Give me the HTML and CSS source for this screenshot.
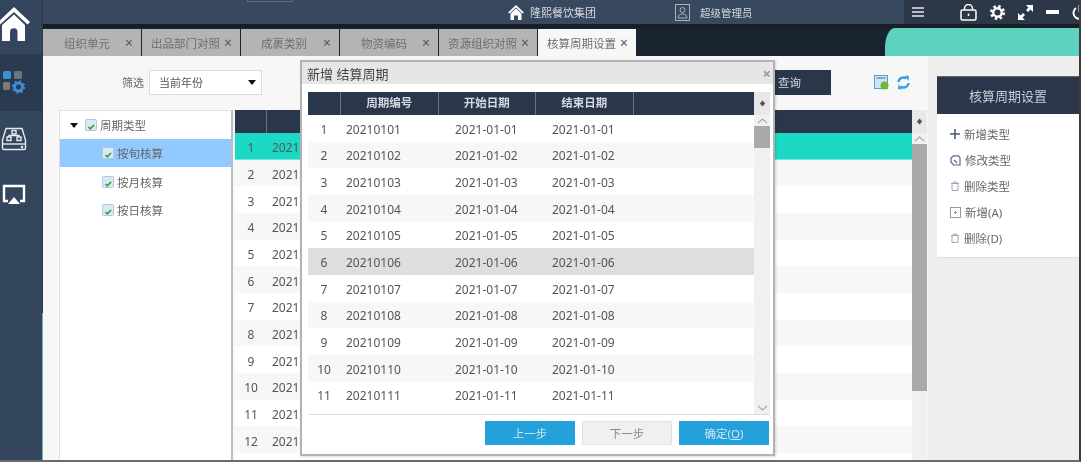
FILE: index.html
```html
<!DOCTYPE html>
<html lang="zh-CN">
<head>
    <meta charset="UTF-8">
    <title>核算周期设置</title>
    <link rel="stylesheet" href="styles.css">
</head>
<body>
    <svg class="sprite" xmlns="http://www.w3.org/2000/svg">
        <symbol id="check" viewBox="0 0 12 12">
            <rect x="0.5" y="0.5" width="11" height="11" rx="1" fill="#dce7f5" stroke="#b4c6e0"/>
            <path d="M3.500 8 5.300 9.800 9 6" fill="none" stroke="#1fa83a" stroke-width="1.700"/>
        </symbol>
        <symbol id="trash" viewBox="0 0 10 10">
            <path d="M1 2.500h8M3.500 2.500V1h3v1.500M2 2.500v7h6v-7" fill="none" stroke="#9aa6b6" stroke-width="1"/>
        </symbol>
        <symbol id="corner" viewBox="0 0 9 9">
            <path d="M4.500 .5 8 4.500 4.500 8.500 1 4.500Z" fill="#555"/>
        </symbol>
        <symbol id="chev-up" viewBox="0 0 11 6">
            <path d="M1 5 5.500 1 10 5" fill="none" stroke="#aaa" stroke-width="1.200"/>
        </symbol>
        <symbol id="chev-down" viewBox="0 0 11 6">
            <path d="M1 1 5.500 5 10 1" fill="none" stroke="#aaa" stroke-width="1.200"/>
        </symbol>
    </svg>
    <div class="app">
        <!-- 左侧菜单 -->
        <nav class="sidebar">
            <div class="nav-home">
                <svg width="30" height="36" viewBox="0 0 30 36"><path d="M-2 16 14 1 30 16 27.500 18.500 14 6 0 18.500Z" fill="#fff"/><path d="M2 19 14 8.500 25 19V35H17.500V26A3.500 3.500 0 0 0 10 26V35H2Z" fill="#fff"/></svg>
            </div>
            <div class="nav-item active">
                <svg width="26" height="26" viewBox="0 0 26 26">
                    <rect x="2" y="2" width="8" height="8" rx="1.500" fill="#3b8fd6"/>
                    <rect x="13" y="2" width="8" height="8" rx="1.500" fill="#6d7480"/>
                    <rect x="2" y="13" width="7" height="8" rx="1.500" fill="#7b7b78"/>
                    <circle cx="17.500" cy="18" r="4" fill="none" stroke="#3b8fd6" stroke-width="3"/>
                    <circle cx="17.500" cy="18" r="6" fill="none" stroke="#3b8fd6" stroke-width="1.500" stroke-dasharray="2 2.700"/>
                </svg>
            </div>
            <div class="nav-item">
                <svg width="26" height="26" viewBox="0 0 26 26" fill="none" stroke="#e8ebef" stroke-width="1.400">
                    <path d="M5 2.500H21L24.500 14V22A1.500 1.500 0 0 1 23 23.500H3A1.500 1.500 0 0 1 1.500 22V14Z"/>
                    <path d="M1.500 18H24.500"/>
                    <rect x="11" y="4.500" width="4" height="3.500"/><rect x="6" y="11" width="4" height="3.500"/><rect x="16" y="11" width="4" height="3.500"/>
                    <path d="M13 8V9.500H8V11M13 9.500H18V11"/>
                    <circle cx="21" cy="21" r=".6"/>
                </svg>
            </div>
            <div class="nav-item">
                <svg width="26" height="26" viewBox="0 0 26 26">
                    <path d="M7 19H3V4H23V19H19" fill="none" stroke="#fff" stroke-width="2.400"/>
                    <path d="M13 15 19 22H7Z" fill="#fff"/>
                </svg>
            </div>
        </nav>

        <div class="main">
            <!-- 顶部栏 -->
            <header class="topbar">
                <div class="top-mark"></div>
                <div class="brand">
                    <svg width="16" height="15" viewBox="0 0 16 15"><path d="M8 0 16 7.500 14.500 8.500 8 2.500 1.500 8.500 0 7.500Z" fill="#fff"/><path d="M2.500 8.500 8 3.500 13.500 8.500V15H10V10.500H6V15H2.500Z" fill="#fff"/></svg>
                    <span>隆熙餐饮集团</span>
                </div>
                <div class="user">
                    <svg width="15" height="17" viewBox="0 0 15 17" fill="none" stroke="#aab2be"><rect x=".5" y=".5" width="14" height="16"/><circle cx="7.500" cy="6" r="2.500"/><path d="M3 14C3 11 5 10 7.500 10S12 11 12 14Z"/></svg>
                    <span>超级管理员</span>
                </div>
                <div class="tools">
                    <svg width="12" height="10" viewBox="0 0 12 10"><path d="M0 1h12M0 5h12M0 9h12" stroke="#e6e8ec" stroke-width="1.700"/></svg>
                    <svg class="lock" width="17" height="17" viewBox="0 0 17 17" fill="none" stroke="#fff" stroke-width="1.500"><rect x="1" y="6" width="15" height="10" rx="1.500"/><path d="M4.500 6V4.500A4 4 0 0 1 12.500 4.500V6M8.500 9.500V12"/></svg>
                    <svg width="15" height="15" viewBox="0 0 16 16"><circle cx="8" cy="8" r="4.500" fill="none" stroke="#fff" stroke-width="2.500"/><circle cx="8" cy="8" r="6.500" fill="none" stroke="#fff" stroke-width="3" stroke-dasharray="2.600 2.500"/></svg>
                    <svg width="15" height="15" viewBox="0 0 15 15" fill="#fff"><path d="M8 0H15V7L12.500 4.500 10 7 8 5 10.500 2.500ZM7 15H0V8L2.500 10.500 5 8 7 10 4.500 12.500Z"/></svg>
                    <svg width="13" height="4" viewBox="0 0 13 4"><rect width="13" height="4" fill="#fff"/></svg>
                    <svg width="15" height="15" viewBox="0 0 15 15" fill="none" stroke="#fff" stroke-width="2"><path d="M4 3A6 6 0 1 0 11 3M7.500 0V7"/></svg>
                </div>
            </header>

            <!-- 标签页 -->
            <div class="tabbar">
                <div class="tab"><span>组织单元</span><i>×</i></div>
                <div class="tab"><span>出品部门对照</span><i>×</i></div>
                <div class="tab"><span>成裹类别</span><i>×</i></div>
                <div class="tab"><span>物资编码</span><i>×</i></div>
                <div class="tab"><span>资源组织对照</span><i>×</i></div>
                <div class="tab current"><span>核算周期设置</span><i>×</i></div>
                <div class="tab-blob"></div>
            </div>

            <div class="content">
                <section class="work">
                    <div class="filter">
                        <label class="filter-label">筛选</label>
                        <div class="select"><span>当前年份</span><b></b></div>
                        <button class="btn-query">查询</button>
                        <svg class="export" width="15" height="15" viewBox="0 0 15 15"><rect x=".5" y=".5" width="13" height="13" fill="#cfe3f2" stroke="#5d9ccb"/><path d="M2.500 3h9" stroke="#5d9ccb" stroke-width="1.500"/><circle cx="10.500" cy="10.500" r="4" fill="#71b53a"/></svg>
                        <svg class="refresh" width="13" height="15" viewBox="0 0 13 15" fill="none" stroke="#3d9fe2" stroke-width="2.400"><path d="M1.500 7A5 5 0 0 1 9.500 3.500"/><path d="M11.500 8A5 5 0 0 1 3.500 11.500"/><path d="M8 .5 12 1 11.500 6Z" fill="#3d9fe2" stroke="none"/><path d="M5 14.500 1 14 1.500 9Z" fill="#3d9fe2" stroke="none"/></svg>
                    </div>
                    <div class="panes">
                        <div class="tree">
                            <div class="tree-row root"><b class="caret"></b><svg width="12" height="12"><use href="#check"/></svg><span>周期类型</span></div>
                            <div class="tree-row selected"><svg width="12" height="12"><use href="#check"/></svg><span>按旬核算</span></div>
                            <div class="tree-row"><svg width="12" height="12"><use href="#check"/></svg><span>按月核算</span></div>
                            <div class="tree-row"><svg width="12" height="12"><use href="#check"/></svg><span>按日核算</span></div>
                        </div>
                        <div class="grid">
                            <div class="grid-body">
                                <div class="grid-head"><div class="h-no"></div><div class="h-code"></div></div>
                                <div class="row teal"><span class="no">1</span><span class="code">2021</span></div>
                                <div class="row"><span class="no">2</span><span class="code">2021</span></div>
                                <div class="row"><span class="no">3</span><span class="code">2021</span></div>
                                <div class="row"><span class="no">4</span><span class="code">2021</span></div>
                                <div class="row"><span class="no">5</span><span class="code">2021</span></div>
                                <div class="row"><span class="no">6</span><span class="code">2021</span></div>
                                <div class="row"><span class="no">7</span><span class="code">2021</span></div>
                                <div class="row"><span class="no">8</span><span class="code">2021</span></div>
                                <div class="row"><span class="no">9</span><span class="code">2021</span></div>
                                <div class="row"><span class="no">10</span><span class="code">2021</span></div>
                                <div class="row"><span class="no">11</span><span class="code">2021</span></div>
                                <div class="row"><span class="no">12</span><span class="code">2021</span></div>
                            </div>
                            <div class="scroll main-scroll">
                                <div class="scroll-corner"><svg width="7" height="7"><use href="#corner"/></svg></div>
                                <div class="scroll-up"><svg width="11" height="6"><use href="#chev-up"/></svg></div>
                                <div class="thumb"></div>
                            </div>
                        </div>
                    </div>
                </section>

                <aside class="side">
                    <div class="side-card">
                        <h3 class="side-title">核算周期设置</h3>
                        <ul class="side-list">
                            <li><svg width="10" height="10" viewBox="0 0 10 10"><path d="M5 0V10M0 5H10" stroke="#44597c" stroke-width="1.500"/></svg>新增类型</li>
                            <li><svg width="11" height="11" viewBox="0 0 11 11" fill="none" stroke="#56688a" stroke-width="1.200"><path d="M1 3 3.500 .8H8.500L10 3V10H3.500L1 7Z"/><path d="M4 5 7 8"/></svg>修改类型</li>
                            <li><svg width="10" height="10"><use href="#trash"/></svg>删除类型</li>
                            <li><svg width="11" height="11" viewBox="0 0 11 11" fill="none" stroke="#8d99ad"><rect x=".5" y=".5" width="10" height="10"/><path d="M4 5.500H7M5.500 4V7"/></svg>新增(A)</li>
                            <li><svg width="10" height="10"><use href="#trash"/></svg>删除(D)</li>
                        </ul>
                    </div>
                </aside>
            </div>
        </div>

        <!-- 弹窗 -->
        <div class="modal">
            <div class="modal-title"><span>新增 结算周期</span><i>×</i></div>
            <div class="modal-grid">
                <div class="modal-table">
                    <div class="m-head">
                        <div class="m-no"></div><div class="m-col">周期编号</div><div class="m-col">开始日期</div><div class="m-col">结束日期</div><div class="m-rest"></div>
                    </div>
                    <div class="m-row"><span class="m-no">1</span><span class="m-cell">20210101</span><span class="m-cell">2021-01-01</span><span class="m-cell">2021-01-01</span></div>
                    <div class="m-row"><span class="m-no">2</span><span class="m-cell">20210102</span><span class="m-cell">2021-01-02</span><span class="m-cell">2021-01-02</span></div>
                    <div class="m-row"><span class="m-no">3</span><span class="m-cell">20210103</span><span class="m-cell">2021-01-03</span><span class="m-cell">2021-01-03</span></div>
                    <div class="m-row"><span class="m-no">4</span><span class="m-cell">20210104</span><span class="m-cell">2021-01-04</span><span class="m-cell">2021-01-04</span></div>
                    <div class="m-row"><span class="m-no">5</span><span class="m-cell">20210105</span><span class="m-cell">2021-01-05</span><span class="m-cell">2021-01-05</span></div>
                    <div class="m-row hover"><span class="m-no">6</span><span class="m-cell">20210106</span><span class="m-cell">2021-01-06</span><span class="m-cell">2021-01-06</span></div>
                    <div class="m-row"><span class="m-no">7</span><span class="m-cell">20210107</span><span class="m-cell">2021-01-07</span><span class="m-cell">2021-01-07</span></div>
                    <div class="m-row"><span class="m-no">8</span><span class="m-cell">20210108</span><span class="m-cell">2021-01-08</span><span class="m-cell">2021-01-08</span></div>
                    <div class="m-row"><span class="m-no">9</span><span class="m-cell">20210109</span><span class="m-cell">2021-01-09</span><span class="m-cell">2021-01-09</span></div>
                    <div class="m-row"><span class="m-no">10</span><span class="m-cell">20210110</span><span class="m-cell">2021-01-10</span><span class="m-cell">2021-01-10</span></div>
                    <div class="m-row"><span class="m-no">11</span><span class="m-cell">20210111</span><span class="m-cell">2021-01-11</span><span class="m-cell">2021-01-11</span></div>
                </div>
                <div class="scroll modal-scroll">
                    <div class="scroll-corner"><svg width="7" height="7"><use href="#corner"/></svg></div>
                    <div class="scroll-up"><svg width="11" height="6"><use href="#chev-up"/></svg></div>
                    <div class="thumb"></div>
                    <div class="scroll-down"><svg width="11" height="6"><use href="#chev-down"/></svg></div>
                </div>
            </div>
            <div class="modal-foot">
                <button class="btn-blue">上一步</button>
                <button class="btn-off">下一步</button>
                <button class="btn-blue">确定(<u>O</u>)</button>
            </div>
        </div>
    </div>
</body>
</html>
```

FILE: styles.css
```css
:root{
    --navy: #34465e;
    --dark: #2a3649;
    --ink: #1a2330;
    --text: #555;
    --font: "Noto Sans", "Noto Sans CJK SC", sans-serif;
}
*{
    box-sizing: border-box;
}
html, body{
    margin: 0;
    height: 100%;
    overflow: hidden;
}
body{
    background-color: #fff;
    color: var(--text);
    font-family: var(--font);
    font-size: 12px;
    border-right: 2px solid #3b3b3b;
    border-bottom: 2px solid #6a6a6a;
}
.sprite{
    display: none;
}
.app{
    position: relative;
    display: flex;
    height: 460px;
    width: 1079px;
    overflow: hidden;
    filter: blur(.5px);
}

/* sidebar */
.sidebar{
    width: 43px;
    flex: 0 0 auto;
    background-color: var(--navy);
    border-right: 1px solid;
    border-image: linear-gradient(#2c3747 68%, #6fb5a8 68%) 1;
}
.nav-home{
    height: 54px;
    padding-top: 6px;
}
.nav-item{
    height: 56.500px;
    display: flex;
    align-items: center;
    padding-left: 1px;
}
.nav-item.active{
    background-color: #2a3a50;
}

/* top */
.main{
    flex: 1;
    min-width: 0;
    display: flex;
    flex-direction: column;
}
.topbar{
    height: 24px;
    flex: 0 0 auto;
    display: flex;
    align-items: center;
    background-color: #38485f;
    color: #d5d9df;
    font-size: 11px;
}
.top-mark{
    width: 46px;
    height: 2px;
    margin-left: 204px;
    align-self: flex-start;
    border: 1px solid #5d6a7c;
    border-top: 0;
}
.brand{
    margin-left: 215px;
    width: 167px;
    display: flex;
    align-items: center;
    gap: 6px;
}
.user{
    width: 229px;
    display: flex;
    align-items: center;
    gap: 10px;
    font-size: 10.500px;
}
.tools{
    flex: 1;
    height: 100%;
    display: flex;
    align-items: center;
    padding-left: 8px;
    gap: 13px;
    background-color: #2c3747;
    overflow: hidden;
}
.lock{
    margin-left: 23px;
}
.tools svg{
    flex: 0 0 auto;
}
.tabbar{
    height: 32px;
    flex: 0 0 auto;
    display: flex;
    align-items: flex-end;
    gap: 1px;
    background-color: var(--ink);
    border-top: 4px solid #181e28;
}
.tab{
    width: 98px;
    height: 27px;
    display: flex;
    align-items: center;
    justify-content: flex-end;
    padding-right: 8px;
    background-color: #b4b4b4;
    color: #6a6f75;
    font-size: 11.500px;
}
.tab:nth-child(2) span, .tab:nth-child(5) span, .tab.current span{
    margin-right: 4px;
}
.tab:nth-child(1) span, .tab:nth-child(4) span{
    margin-right: 15px;
}
.tab:nth-child(3) span{
    margin-right: 16px;
}
.tab i{
    font-style: normal;
    font-size: 14px;
    line-height: 1;
    color: #555;
}
.tab.current{
    background-color: #f7f7f7;
}
.tab-blob{
    width: 194px;
    height: 28px;
    margin-left: auto;
    background-color: #5dd3bd;
    border-radius: 10px 0 0 0 / 20px 0 0 0;
}

/* content */
.content{
    flex: 1;
    min-height: 0;
    display: flex;
}
.work{
    width: 885px;
    flex: 0 0 auto;
    background-color: #f7f7f7;
}
.filter{
    height: 54px;
    display: flex;
    align-items: center;
    padding: 0 0 2px 79px;
}
.filter-label{
    width: 27px;
    color: #6a6a6a;
    font-size: 11px;
}
.select{
    width: 113px;
    height: 25px;
    display: flex;
    align-items: center;
    justify-content: space-between;
    padding: 0 5px 0 9px;
    background-color: #fff;
    border: 1px solid #dcdcdc;
    font-size: 11px;
}
.select b, .caret{
    display: block;
    width: 0;
    height: 0;
    border: 4px solid transparent;
    border-top: 5px solid #111;
    border-bottom: 0;
}
.btn-query{
    width: 91px;
    height: 25px;
    margin-left: 478px;
    padding: 0 0 0 38px;
    text-align: left;
    background-color: var(--dark);
    color: #d5d9df;
    border: 0;
    font-family: var(--font);
    font-size: 11.500px;
}
.export{
    margin-left: 43px;
}
.refresh{
    margin-left: 8px;
}
.panes{
    display: flex;
    height: 352px;
    margin-left: 16px;
    gap: 2px;
}
.tree{
    width: 174px;
    background-color: #fff;
    border: 1px solid #e2e2e2;
    border-right: 2px solid #bdbdbd;
    border-bottom: 0;
}
.tree-row{
    height: 28.400px;
    display: flex;
    align-items: center;
    gap: 3px;
    padding-left: 42px;
    font-size: 11.500px;
    color: #666;
}
.tree-row.root{
    height: 28px;
    padding-left: 10px;
    gap: 0;
}
.tree-row.root svg{
    margin: 0 3px 0 7px;
}
.tree-row.selected{
    background-color: #92c9ff;
}
.grid{
    width: 692px;
    display: flex;
}
.grid-body{
    width: 677px;
    background-color: #fff;
}
.grid-head{
    height: 23px;
    display: flex;
    background-color: var(--dark);
}
.h-no{
    width: 32px;
    border-right: 1px solid #68717e;
}
.h-code{
    width: 98px;
    border-right: 1px solid #68717e;
}
.row{
    height: 26.670px;
    padding-top: 3px;
    display: flex;
    align-items: center;
}
.row:nth-child(even){
    background-color: #fff;
}
.row:nth-child(odd){
    background-color: #f7f7f7;
}
.row.teal{
    background-color: #1bd9c4;
    border-bottom: 1px solid #6ee8da;
}
.no{
    width: 32px;
    text-align: center;
}
.code{
    padding-left: 5px;
}
.scroll{
    width: 15px;
    flex: 0 0 auto;
    background-color: #f0f0f0;
    display: flex;
    flex-direction: column;
}
.scroll-corner{
    height: 23px;
    display: flex;
    align-items: center;
    justify-content: center;
    background-color: #e8e8e8;
}
.scroll-up, .scroll-down{
    height: 11px;
    display: flex;
    align-items: center;
    justify-content: center;
}
.thumb{
    background-color: #a9a9a9;
}
.main-scroll .thumb{
    height: 247px;
}

/* right panel */
.side{
    flex: 1;
    min-width: 0;
    padding: 20px 0 0 9px;
    background-color: #eeeeee;
}
.side-card{
    height: 182px;
    background-color: #fff;
    border-bottom: 1px solid #ddd;
}
.side-title{
    margin: 0;
    height: 38px;
    line-height: 38px;
    text-align: center;
    background-color: var(--dark);
    color: #c6ccd4;
    font-size: 13px;
    font-weight: normal;
    border-top: 1px solid #666;
}
.side-list{
    list-style: none;
    margin: 0;
    padding: 7px 0 0 13px;
}
.side-list li{
    height: 26px;
    display: flex;
    align-items: center;
    gap: 4px;
    font-size: 11.500px;
    color: #666;
}

/* modal */
.modal{
    position: absolute;
    left: 300px;
    top: 60px;
    width: 475px;
    height: 396px;
    background-color: #fff;
    border: 2px solid #b3b3b3;
    display: flex;
    flex-direction: column;
    box-shadow: 1px 1px 2px rgba(0,0,0,.15);
}
.modal-title{
    height: 22px;
    flex: 0 0 auto;
    display: flex;
    align-items: center;
    justify-content: space-between;
    padding: 0 2px 0 5px;
    background-color: #e6e6e6;
    color: #444;
    font-size: 13px;
}
.modal-title i{
    font-style: normal;
    font-size: 15px;
    font-weight: bold;
    color: #999;
    line-height: 1;
}
.modal-grid{
    height: 323px;
    margin: 8px 3px 0 6px;
    display: flex;
    border-bottom: 1px solid #ddd;
    overflow: hidden;
}
.modal-table{
    flex: 1;
}
.m-head{
    height: 23px;
    display: flex;
    background-color: var(--dark);
    color: #d5d9df;
    font-weight: bold;
    font-size: 11.500px;
    line-height: 22px;
}
.m-no{
    width: 32px;
    flex: 0 0 auto;
    text-align: center;
}
.m-head .m-no{
    width: 33px;
}
.m-head .m-no, .m-col{
    border-right: 1px solid #68717e;
}
.m-col{
    width: 97.500px;
    text-align: center;
}
.m-row{
    height: 26.670px;
    padding-top: 2px;
    display: flex;
    align-items: center;
}
.m-row:nth-child(odd){
    background-color: #f7f7f7;
}
.m-row.hover{
    background-color: #dedede;
}
.m-cell{
    width: 97.500px;
    padding-left: 6px;
}
.m-cell:nth-child(2){
    width: 109px;
}
.m-cell:nth-child(3){
    width: 97px;
}
.modal-scroll{
    width: 16px;
}
.modal-scroll .thumb{
    height: 22px;
}
.modal-scroll .scroll-down{
    margin-top: auto;
    margin-bottom: 1px;
}
.modal-foot{
    flex: 1;
    display: flex;
    justify-content: flex-end;
    align-items: center;
    gap: 7px;
    padding: 0 4px 4px 0;
}
.modal-foot button{
    width: 90px;
    height: 24px;
    padding: 0;
    font-family: var(--font);
    font-size: 11.500px;
    border: 1px solid transparent;
}
.btn-blue{
    background-color: #24a0da;
    color: #cfe6f3;
}
.modal-foot .btn-off{
    background-color: #f0f0f0;
    border-color: #e2e2e2;
    color: #888;
}
```
